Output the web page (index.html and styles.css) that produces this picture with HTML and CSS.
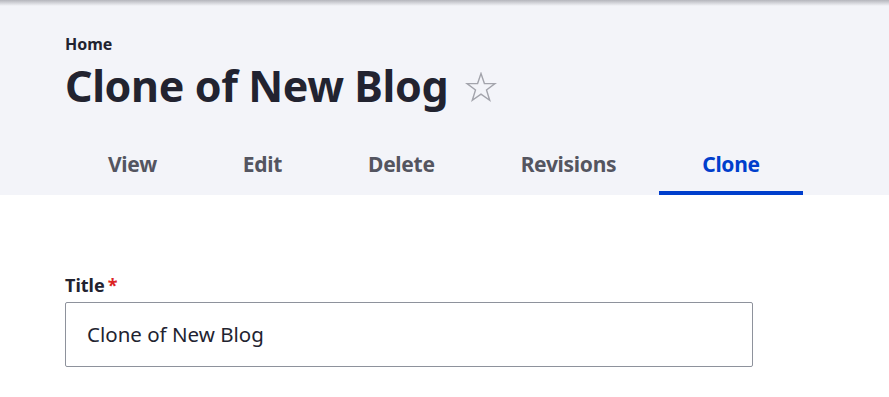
FILE: index.html
```html
<!DOCTYPE html>
<html>
<head>
<meta charset="utf-8">
<link rel="stylesheet" href="styles.css">
</head>
<body>
<header class="region-header">
  <div class="shade"></div>
  <nav class="breadcrumb">Home</nav>
  <div class="title-row">
    <h1 class="page-title">Clone of New Blog</h1>
    <svg class="star" width="32" height="32" viewBox="0 0 32 32"><polygon points="16,1.5 19.4,11.5 30,11.6 21.5,18 24.7,28.3 16,22.1 7.3,28.3 10.5,18 2,11.6 12.6,11.5" fill="none" stroke="#a3a4ac" stroke-width="1.4" stroke-linejoin="miter"/></svg>
  </div>
  <ul class="tabs">
    <li class="tab">View</li>
    <li class="tab">Edit</li>
    <li class="tab">Delete</li>
    <li class="tab">Revisions</li>
    <li class="tab active">Clone</li>
  </ul>
</header>
<main class="content">
  <label class="form-label">Title<span class="req">*</span></label>
  <div class="form-input">Clone of New Blog</div>
</main>
</body>
</html>
```
FILE: styles.css
```css
html, body { margin: 0; padding: 0; background: #fff; }
body { font-family: "Noto Sans", "Open Sans", sans-serif; color: #222330; }
.region-header { background: #f3f4f9; padding: 0 0 0 65px; position: relative; }
.shade { position: absolute; left: 0; right: 0; top: 0; height: 6px; background: linear-gradient(#b4b5bc, rgba(243,244,249,0)); }
.breadcrumb { padding-top: 34px; font-size: 16px; font-weight: 700; line-height: 20px; color: #222330; }
.title-row { display: flex; align-items: center; margin-top: 7px; height: 50px; }
.page-title { margin: 0; font-size: 43px; font-weight: 700; line-height: 50px; letter-spacing: -0.4px; color: #222330; }
.star { margin-left: 17px; margin-top: 4px; }
.tabs { list-style: none; margin: 0; padding: 0; display: flex; margin-top: 24px; }
.tab { padding: 0 43px; height: 60px; line-height: 58px; font-size: 21px; font-weight: 700; color: #545560; box-sizing: border-box; letter-spacing: -0.3px; }
.tab.active { color: #003ecc; border-bottom: 4px solid #003ecc; }
.content { padding: 79px 0 0 65px; }
.form-label { display: block; font-size: 18px; font-weight: 700; line-height: 22px; color: #222330; }
.req { color: #dc2323; margin-left: 3px; }
.form-input { margin-top: 6px; width: 688px; height: 65px; box-sizing: border-box; border: 1px solid #8e929c; border-radius: 2px; padding: 0 21px; font-size: 20.5px; line-height: 63px; color: #222330; }
```
